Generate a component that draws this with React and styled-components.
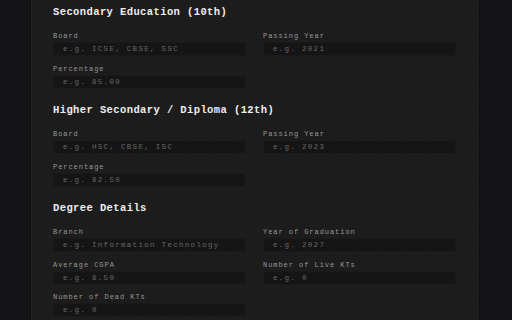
import styled, { createGlobalStyle } from "styled-components";

const GlobalStyle = createGlobalStyle`
  html, body {
    margin: 0;
    padding: 0;
    background: #131315;
    height: 320px;
    overflow: hidden;
  }
  * {
    box-sizing: border-box;
  }
`;

const sections = [
  {
    title: "Secondary Education (10th)",
    fields: [
      { label: "Board", placeholder: "e.g. ICSE, CBSE, SSC" },
      { label: "Passing Year", placeholder: "e.g. 2021" },
      { label: "Percentage", placeholder: "e.g. 85.00" },
    ],
  },
  {
    title: "Higher Secondary / Diploma (12th)",
    fields: [
      { label: "Board", placeholder: "e.g. HSC, CBSE, ISC" },
      { label: "Passing Year", placeholder: "e.g. 2023" },
      { label: "Percentage", placeholder: "e.g. 82.50" },
    ],
  },
  {
    title: "Degree Details",
    fields: [
      { label: "Branch", placeholder: "e.g. Information Technology" },
      { label: "Year of Graduation", placeholder: "e.g. 2027" },
      { label: "Average CGPA", placeholder: "e.g. 8.50" },
      { label: "Number of Live KTs", placeholder: "e.g. 0" },
      { label: "Number of Dead KTs", placeholder: "e.g. 0" },
    ],
  },
];

export default function App() {
  return (
    <>
      <GlobalStyle />
      <Page>
        <Panel>
          {sections.map((section) => (
            <Section key={section.title}>
              <SectionTitle>{section.title}</SectionTitle>
              <FieldGrid>
                {section.fields.map((field) => (
                  <Field key={field.label}>
                    <Label>{field.label}</Label>
                    <Input type="text" placeholder={field.placeholder} />
                  </Field>
                ))}
              </FieldGrid>
            </Section>
          ))}
        </Panel>
      </Page>
    </>
  );
}

const Page = styled.div`
  height: 320px;
  padding: 0 34px 0 31px;
  background-color: #131315;
  background-image: radial-gradient(rgba(255, 255, 255, 0.025) 1px, transparent 1px);
  background-size: 3px 3px;
  font-family: "Liberation Mono", "DejaVu Sans Mono", monospace;
`;

const Panel = styled.main`
  height: 320px;
  padding: 4.5px 20px 0 21px;
  background-color: #1c1c1c;
  background-image: radial-gradient(rgba(255, 255, 255, 0.018) 1px, transparent 1px);
  background-size: 3px 3px;
  border-left: 1px solid #242424;
  border-right: 1px solid #262626;
  display: flex;
  flex-direction: column;
  gap: 14px;
`;

const Section = styled.section`
  display: flex;
  flex-direction: column;
  gap: 12.5px;
`;

const SectionTitle = styled.h2`
  margin: 0;
  font-size: 10.5px;
  line-height: 14px;
  font-weight: 700;
  letter-spacing: 0.4px;
  color: #ededed;
`;

const FieldGrid = styled.div`
  display: grid;
  grid-template-columns: 193px 193px;
  column-gap: 17px;
  row-gap: 7.5px;
`;

const Field = styled.div`
  display: flex;
  flex-direction: column;
  gap: 1px;
`;

const Label = styled.label`
  font-size: 7px;
  line-height: 10px;
  letter-spacing: 0.95px;
  color: #979797;
`;

const Input = styled.input`
  height: 14px;
  width: 100%;
  padding: 0 9px;
  border: 1px solid #1a1a1a;
  border-radius: 2px;
  background: #151515;
  font-family: inherit;
  font-size: 7.5px;
  letter-spacing: 1.3px;
  color: #cfcfcf;
  outline: none;

  &::placeholder {
    color: #676767;
  }
`;
